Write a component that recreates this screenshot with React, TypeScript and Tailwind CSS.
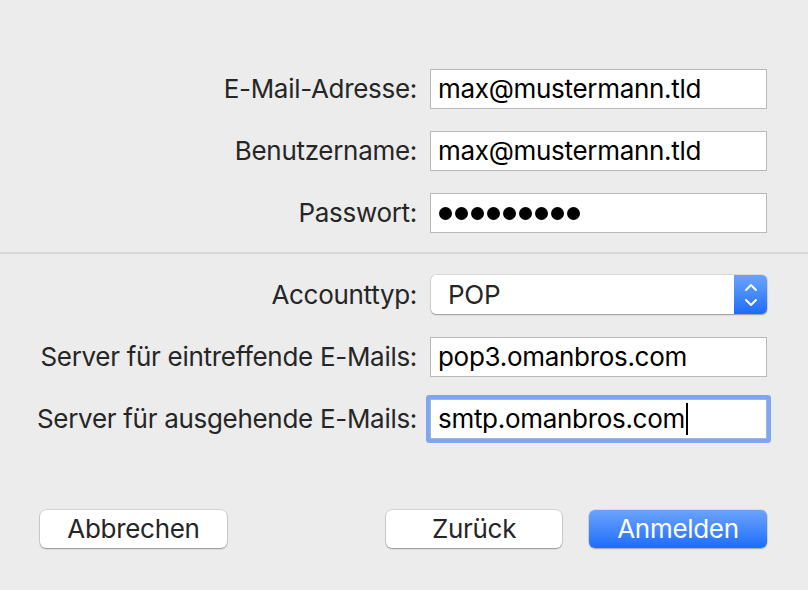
import React from "react";

const FONT = { fontFamily: "Inter, 'Liberation Sans', sans-serif" };

function Row({ label, children }: { label: string; children: React.ReactNode }) {
  return (
    <div className="flex items-center h-[40px]">
      <div className="w-[417px] text-right text-[26px] text-[#262626] leading-none whitespace-nowrap tracking-[-0.3px]">
        {label}
      </div>
      <div className="ml-[13px] w-[337px] h-full">{children}</div>
    </div>
  );
}

function TextField({ value }: { value: string }) {
  return (
    <div className="h-full border border-[#b9b9b9] bg-white flex items-center pl-[7px] text-[26px] text-black leading-none tracking-[-0.3px]">
      {value}
    </div>
  );
}

export default function App() {
  return (
    <div className="w-[808px] h-[590px] bg-[#ececec] overflow-hidden flex flex-col" style={FONT}>
      <div className="pt-[69px] flex flex-col gap-[22px]">
        <Row label="E-Mail-Adresse:">
          <TextField value="max@mustermann.tld" />
        </Row>
        <Row label="Benutzername:">
          <TextField value="max@mustermann.tld" />
        </Row>
        <Row label="Passwort:">
          <div className="h-full border border-[#b9b9b9] bg-white flex items-center pl-[8px] gap-[3px]">
            {Array.from({ length: 9 }).map((_, i) => (
              <span key={i} className="w-[13px] h-[13px] rounded-full bg-black" />
            ))}
          </div>
        </Row>
      </div>

      <div className="mt-[19px] h-[2px] bg-[#d8d8d8]" />

      <div className="pt-[21px] flex flex-col gap-[22px]">
        <Row label="Accounttyp:">
          <div className="h-[39px] ml-[1px] rounded-[5px] bg-white flex items-stretch overflow-hidden shadow-[0_0_0_0.5px_rgba(0,0,0,0.15),0_1px_1.5px_rgba(0,0,0,0.3)]">
            <div className="flex-1 flex items-center pl-[17px] text-[26px] text-[#262626] leading-none tracking-[-0.3px]">POP</div>
            <div className="w-[33px] bg-gradient-to-b from-[#6aa3fb] to-[#1a6cfb] flex items-center justify-center">
              <svg width="14" height="30" viewBox="0 0 14 30" fill="none" stroke="white" strokeWidth="2" strokeLinecap="round" strokeLinejoin="round">
                <path d="M2 10 L7 5 L12 10" />
                <path d="M2 20 L7 25 L12 20" />
              </svg>
            </div>
          </div>
        </Row>
        <Row label="Server für eintreffende E-Mails:">
          <TextField value="pop3.omanbros.com" />
        </Row>
        <Row label="Server für ausgehende E-Mails:">
          <div className="h-full rounded-[1px] border border-[#9fb5dc] bg-white flex items-center pl-[7px] text-[26px] text-black leading-none tracking-[-0.3px] shadow-[0_0_0_4px_#7ea7ee]">
            smtp.omanbros.com
            <span className="ml-[1px] w-[2px] h-[32px] bg-black" />
          </div>
        </Row>
      </div>

      <div className="mt-[71px] flex items-center h-[38px] text-[26px] leading-none tracking-[-0.3px]">
        <button className="ml-[40px] w-[187px] h-full rounded-[6px] bg-white text-[#262626] shadow-[0_0_0_0.5px_rgba(0,0,0,0.2),0_1px_1.5px_rgba(0,0,0,0.3)]">
          Abbrechen
        </button>
        <button className="ml-[159px] w-[176px] h-full rounded-[6px] bg-white text-[#262626] shadow-[0_0_0_0.5px_rgba(0,0,0,0.2),0_1px_1.5px_rgba(0,0,0,0.3)]">
          Zurück
        </button>
        <button className="ml-[27px] w-[178px] h-full rounded-[6px] bg-gradient-to-b from-[#6ba3fb] to-[#1a6cfb] text-white shadow-[0_0_0_0.5px_rgba(0,0,0,0.15),0_1px_1.5px_rgba(0,0,0,0.25)]">
          Anmelden
        </button>
      </div>
    </div>
  );
}
